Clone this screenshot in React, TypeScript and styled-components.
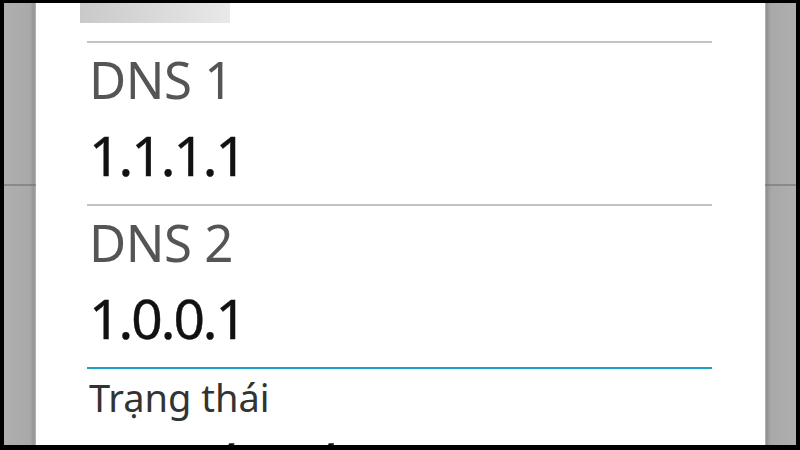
import React from "react";
import styled, { createGlobalStyle } from "styled-components";

const Global = createGlobalStyle`
  html, body { margin: 0; padding: 0; background: #000; }
  body { width: 800px; height: 450px; overflow: hidden; }
  #root { width: 800px; height: 450px; }
`;

const Frame = styled.div`
  box-sizing: border-box;
  width: 800px;
  height: 450px;
  background: #000;
  padding: 3px 4px 5px 4px;
  display: flex;
`;

const Screen = styled.div`
  flex: 1;
  display: flex;
  overflow: hidden;
  background: #acacac;
`;

const SideStrip = styled.div<{ $side: "left" | "right" }>`
  width: ${(p) => (p.$side === "left" ? 32 : 31)}px;
  flex-shrink: 0;
  display: flex;
  flex-direction: column;
  background: ${(p) =>
    p.$side === "left"
      ? "linear-gradient(to right, #afafaf 0, #a9a9a9 26px, #999 29px, #9a9a9a 31px, #c8c8c8 32px)"
      : "linear-gradient(to right, #d0d0d0 0, #8f8f8f 1px, #999 3px, #a8a8a8 6px, #afafaf 100%)"};
`;

const StripDivider = styled.div`
  margin-top: 181px;
  height: 2px;
  background: rgba(110, 110, 110, 0.55);
`;

const Dialog = styled.div`
  flex: 1;
  background: #fff;
  display: flex;
  flex-direction: column;
  overflow: hidden;
`;

const TitleStub = styled.div`
  margin-left: 44px;
  width: 150px;
  height: 20px;
  flex-shrink: 0;
  background: linear-gradient(to right, #c9c9c9, #e9e9e9);
`;

const Fields = styled.div`
  display: flex;
  flex-direction: column;
  padding: 18px 53px 0 51px;
`;

const Rule = styled.div<{ $active?: boolean }>`
  height: 2px;
  flex-shrink: 0;
  background: ${(p) => (p.$active ? "#1aa0c9" : "#c3c3c3")};
`;

const Field = styled.div`
  display: flex;
  flex-direction: column;
  padding: 6px 0 19px 2px;
  font-family: "Noto Sans", "Open Sans", sans-serif;
`;

const Label = styled.div`
  font-size: 51px;
  line-height: 60px;
  color: #555;
  letter-spacing: -0.5px;
  white-space: nowrap;
`;

const Value = styled.div`
  margin-top: 16px;
  font-size: 55px;
  line-height: 60px;
  color: #111;
  letter-spacing: -2px;
  -webkit-text-stroke: 0.4px #111;
  white-space: nowrap;
`;

const Status = styled.div`
  display: flex;
  flex-direction: column;
  padding: 5px 0 0 2px;
  font-family: "Noto Sans", "Open Sans", sans-serif;
`;

const StatusLabel = styled.div`
  font-size: 38px;
  line-height: 46px;
  color: #333;
  white-space: nowrap;
`;

const StatusValue = styled.div`
  margin-top: 17px;
  font-size: 55px;
  line-height: 60px;
  color: #111;
  -webkit-text-stroke: 0.4px #111;
  white-space: nowrap;
`;

const dns = [
  { label: "DNS 1", value: "1.1.1.1" },
  { label: "DNS 2", value: "1.0.0.1" },
];

export default function App() {
  return (
    <>
      <Global />
      <Frame>
        <Screen>
          <SideStrip $side="left">
            <StripDivider />
          </SideStrip>
          <Dialog>
            <TitleStub />
            <Fields>
              {dns.map((d) => (
                <React.Fragment key={d.label}>
                  <Rule />
                  <Field>
                    <Label>{d.label}</Label>
                    <Value>{d.value}</Value>
                  </Field>
                </React.Fragment>
              ))}
              <Rule $active />
              <Status>
                <StatusLabel>Trạng thái</StatusLabel>
                <StatusValue>Đã kết nối</StatusValue>
              </Status>
            </Fields>
          </Dialog>
          <SideStrip $side="right">
            <StripDivider />
          </SideStrip>
        </Screen>
      </Frame>
    </>
  );
}
